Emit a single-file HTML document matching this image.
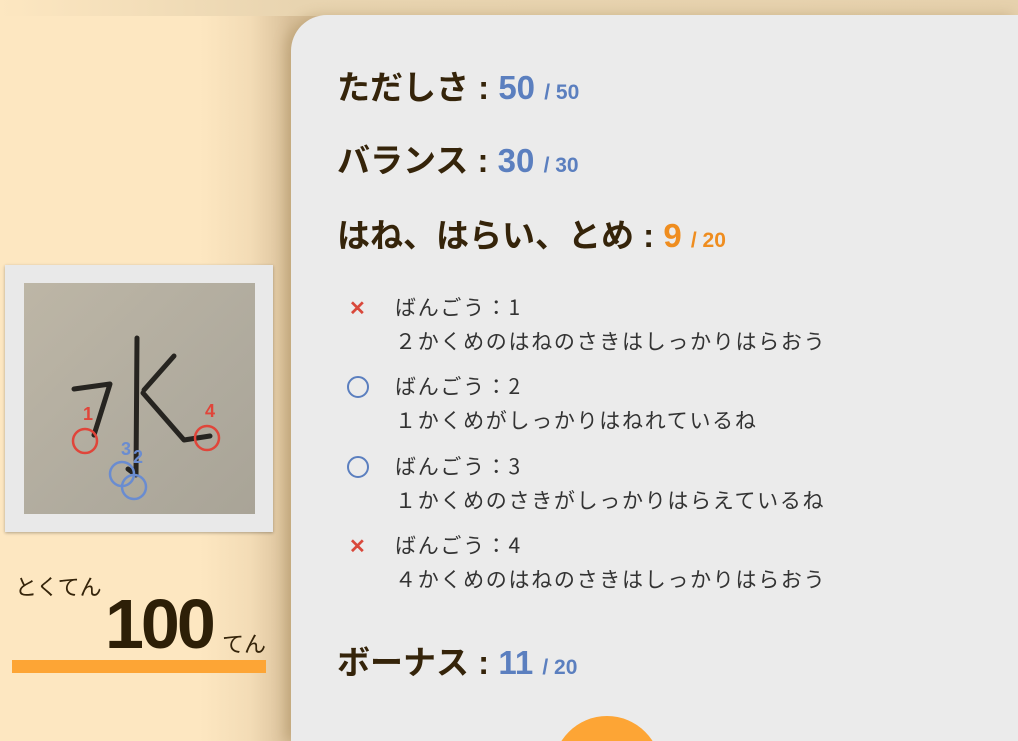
<!DOCTYPE html>
<html><head><meta charset="utf-8"><style>
*{margin:0;padding:0;box-sizing:border-box}
html,body{width:1018px;height:741px;overflow:hidden}
body{position:relative;font-family:"Liberation Sans","Noto Sans CJK JP",sans-serif;background:linear-gradient(90deg,#fde7c1 0,#fde7c1 200px,#f3dcb6 250px,#d9c09a 290px);}
.top{position:absolute;left:0;top:0;width:1018px;height:16px;background:linear-gradient(90deg,#fde7c1,#e8d4b0 300px,#e6d1ad)}
.panel{position:absolute;left:291px;top:15px;width:727px;height:726px;background:#ebebeb;border-top-left-radius:36px;box-shadow:-6px 0 12px rgba(150,120,70,.35);overflow:hidden}
.h{position:absolute;left:337px;font-weight:bold;font-size:33px;color:#35240a;white-space:nowrap;line-height:44px}
.h .n{color:#5b7fbf;font-size:33px}
.h .s{color:#5b7fbf;font-size:21px}
.h .o{color:#ef8d1f}
.item{position:absolute;left:348px;font-size:21px;letter-spacing:1.7px;color:#333;line-height:34px;white-space:nowrap;font-family:"Noto Sans CJK JP",sans-serif}
.item .t{position:absolute;left:47px}
.card{position:absolute;left:5px;top:265px;width:268px;height:267px;background:#e9e9e9;box-shadow:0 1px 3px rgba(0,0,0,.3)}
.img{position:absolute;left:19px;top:18px;width:231px;height:231px;background:linear-gradient(135deg,#bdb6a6,#b0ab9e 60%,#a9a497)}
</style></head><body>
<div class="top"></div>
<div class="panel"><div style="position:absolute;left:262px;top:701px;width:108px;height:108px;border-radius:50%;background:#fda535"></div></div>
<div class="h" style="top:66px">ただしさ : <span class="n">50</span> <span class="s">/ 50</span></div>
<div class="h" style="top:139px">バランス : <span class="n">30</span> <span class="s">/ 30</span></div>
<div class="h" style="top:214px">はね、はらい、とめ : <span class="n o">9</span> <span class="s o">/ 20</span></div>
<div class="item" style="top:290px"><span style="color:#d9483b;font-weight:bold;font-size:20px;margin-left:1px">✕</span><span class="t">ばんごう：1</span></div>
<div class="item" style="top:324px"><span class="t">２かくめのはねのさきはしっかりはらおう</span></div>
<div class="item" style="top:369px"><span style="display:inline-block;width:22px;height:22px;border:2px solid #5b7fbf;border-radius:50%;margin-left:-1px;vertical-align:-4px"></span><span class="t">ばんごう：2</span></div>
<div class="item" style="top:403px"><span class="t">１かくめがしっかりはねれているね</span></div>
<div class="item" style="top:449px"><span style="display:inline-block;width:22px;height:22px;border:2px solid #5b7fbf;border-radius:50%;margin-left:-1px;vertical-align:-4px"></span><span class="t">ばんごう：3</span></div>
<div class="item" style="top:483px"><span class="t">１かくめのさきがしっかりはらえているね</span></div>
<div class="item" style="top:528px"><span style="color:#d9483b;font-weight:bold;font-size:20px;margin-left:1px">✕</span><span class="t">ばんごう：4</span></div>
<div class="item" style="top:562px"><span class="t">４かくめのはねのさきはしっかりはらおう</span></div>
<div class="h" style="top:641px">ボーナス : <span class="n">11</span> <span class="s">/ 20</span></div>
<div class="card"><div class="img">
<svg width="231" height="231" viewBox="0 0 231 231" style="position:absolute;left:0;top:0">
<g fill="none" stroke="#262420" stroke-width="5" stroke-linecap="round" stroke-linejoin="round">
<path d="M50 106 L86 101 L70 152"/>
<path d="M113 55 L112 192 L104 186"/>
<path d="M150 73 L120 107"/>
<path d="M119 110 L160 157 L186 153"/>
</g>
<g fill="none" stroke-width="2.5">
<circle cx="61" cy="158" r="12" stroke="#e0453a"/>
<circle cx="183" cy="155" r="12" stroke="#e0453a"/>
<circle cx="98" cy="191" r="12" stroke="#6a8cd0"/>
<circle cx="110" cy="204" r="12" stroke="#6a8cd0"/>
</g>
<g font-family="Liberation Sans,sans-serif" font-size="18" font-weight="bold">
<text x="59" y="137" fill="#e0453a">1</text>
<text x="181" y="134" fill="#e0453a">4</text>
<text x="97" y="172" fill="#6a8cd0">3</text>
<text x="109" y="180" fill="#6a8cd0">2</text>
</g></svg></div></div>
<div style="position:absolute;left:15px;top:570px;font-size:22px;color:#35240a;font-family:'Noto Sans CJK JP',sans-serif">とくてん</div>
<div style="position:absolute;left:105px;top:584px;font-size:70px;font-weight:bold;color:#2d1f07;letter-spacing:-3px;line-height:80px">100</div>
<div style="position:absolute;left:222px;top:627px;font-size:22px;color:#35240a;font-family:'Noto Sans CJK JP',sans-serif">てん</div>
<div style="position:absolute;left:12px;top:660px;width:254px;height:13px;background:#fda535"></div>
</body></html>
